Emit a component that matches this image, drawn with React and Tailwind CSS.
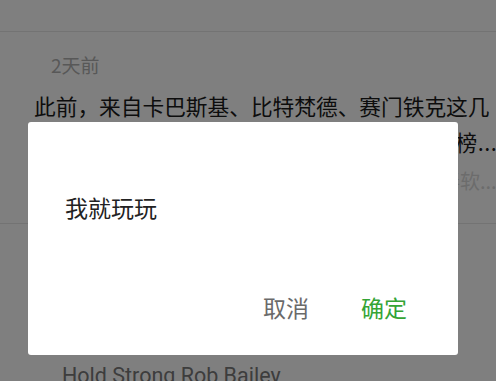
import React from 'react';

const cjk = { fontFamily: '"Noto Sans CJK SC", "Noto Sans", sans-serif' };
const latin = { fontFamily: 'Roboto, "Noto Sans CJK SC", sans-serif' };

const App = () => {
    return (
        <div className="relative h-[381px] w-[496px] overflow-hidden bg-white" style={cjk}>
            {/* Page underneath */}
            <div className="h-[32px] border-b border-[#e6e6e6]" />

            <div className="border-b border-[#e6e6e6] pt-[21px] pb-[24px]">
                <div className="pl-[51px] text-[19px] leading-[24px] text-[#b0b0b0]">2天前</div>
                <div className="mt-[11px] pl-[34px] text-[21.7px] leading-[36px] text-[#1a1a1a] whitespace-nowrap">
                    <div>此前，来自卡巴斯基、比特梵德、赛门铁克这几</div>
                    <div className="tracking-[0.5px]">家厂商的杀毒软件一直占据着各大评测排行榜...</div>
                </div>
                <div className="mt-[3px] pl-[40px] text-[20px] leading-[36px] text-[#d8d8d8] whitespace-nowrap">
                    据安全评测中心年度报告显示多款国产免费杀毒软...
                </div>
            </div>

            <div className="pt-[22px]">
                <div className="pl-[51px] text-[19px] leading-[24px] text-[#b0b0b0]">3天前</div>
                <div className="mt-[91px] pl-[62px] text-[21.5px] leading-[30px] text-[#7a7a7a]" style={latin}>
                    Hold Strong Rob Bailey
                </div>
            </div>

            {/* Dim overlay */}
            <div className="absolute inset-0 bg-black/50" />

            {/* Dialog */}
            <div className="absolute left-[28px] top-[122px] w-[430px] h-[233px] rounded-[3px] bg-white flex flex-col">
                <div className="pl-[37px] pt-[70px] text-[23px] leading-[30px] text-[#222]">我就玩玩</div>
                <div className="mt-auto flex justify-end gap-[52px] pr-[51px] pb-[33px] text-[23px] leading-[30px]">
                    <button className="text-[#6a6a6a]">取消</button>
                    <button className="text-[#34a435]">确定</button>
                </div>
            </div>
        </div>
    );
};

export default App;
